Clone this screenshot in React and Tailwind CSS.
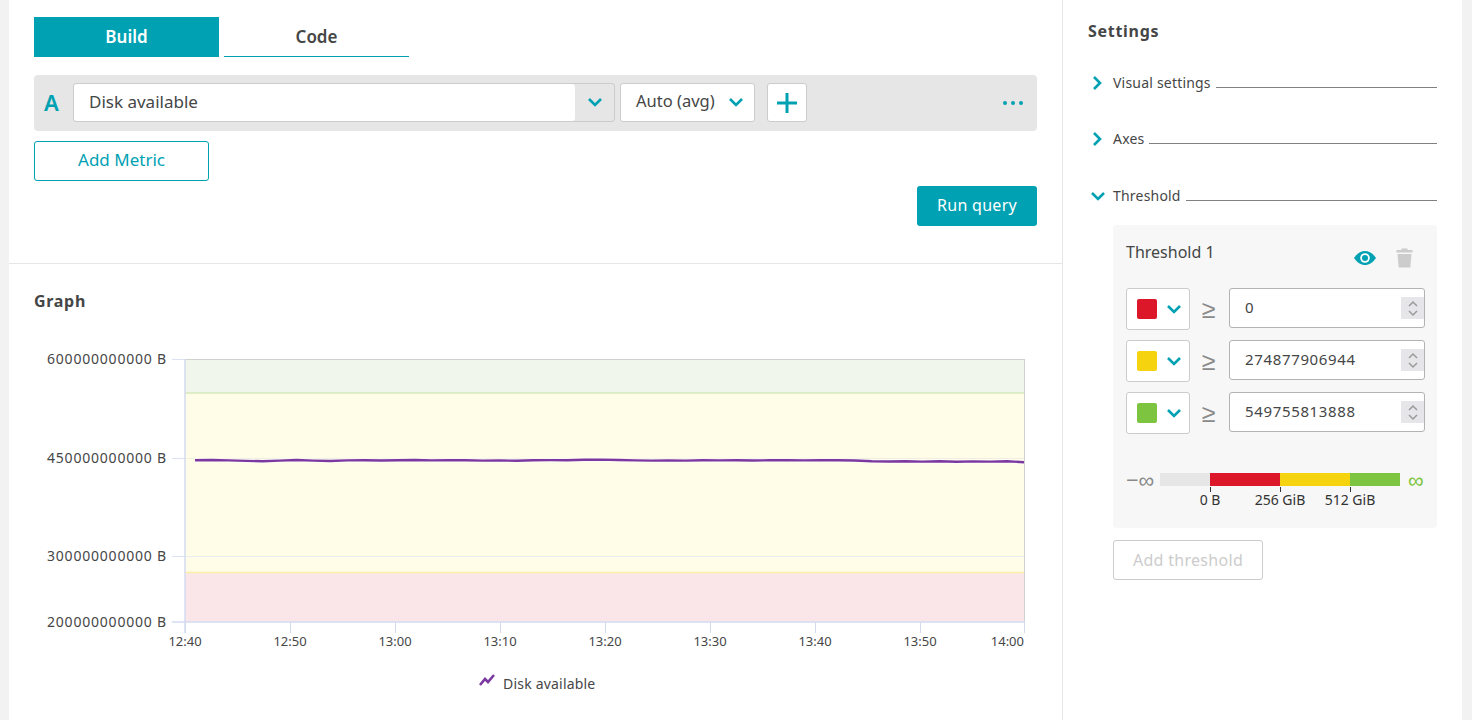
import React from "react";

const lineY = [460.3, 460, 460.4, 460.9, 461.2, 460.6, 460, 460.6, 461, 460.4, 460.2, 460.5, 460.3, 460, 460.4, 460.2, 460.3, 460.6, 460.5, 460.7, 460.2, 460.1, 460.2, 459.8, 459.6, 460, 460.4, 460.6, 460.5, 460.6, 460.3, 460.4, 460.2, 460.5, 460.3, 460.2, 460.4, 460.2, 460.3, 460.5, 461.2, 461.5, 461.2, 461.6, 461.3, 461.8, 461.4, 461.6, 461.3, 462.2];
const linePoints = lineY.map((y, i) => `${195 + (i * 829) / (lineY.length - 1)},${y}`).join(" ");

const yAxis = [
  { label: "600000000000 B", y: 359 },
  { label: "450000000000 B", y: 458 },
  { label: "300000000000 B", y: 556 },
  { label: "200000000000 B", y: 622 },
];
const xAxis = ["12:40", "12:50", "13:00", "13:10", "13:20", "13:30", "13:40", "13:50", "14:00"];

function Chevron({ dir = "down", className = "" }) {
  if (dir === "right") {
    return (
      <svg width="11" height="16" viewBox="0 0 11 16" className={className}>
        <polyline points="2,2 8,8 2,14" fill="none" stroke="#00a1b2" strokeWidth="2.6" />
      </svg>
    );
  }
  return (
    <svg width="16" height="11" viewBox="0 0 16 11" className={className}>
      <polyline points="2,2 8,8 14,2" fill="none" stroke="#00a1b2" strokeWidth="2.6" />
    </svg>
  );
}

function Chart() {
  return (
    <svg viewBox="9 320 1053 380" width="1053" height="380" className="block" style={{ fontFamily: "'Noto Sans', sans-serif" }}>
      <rect x="185" y="359" width="840" height="34" fill="#f0f6ec" />
      <rect x="185" y="393" width="840" height="179" fill="#fffde8" />
      <rect x="185" y="572" width="840" height="50" fill="#fae6e9" />
      <line x1="185" x2="1025" y1="393" y2="393" stroke="#d5e9bb" strokeWidth="1.5" />
      <line x1="185" x2="1025" y1="572.5" y2="572.5" stroke="#fbeea6" strokeWidth="1.5" />
      <line x1="185" x2="1025" y1="359.5" y2="359.5" stroke="#cfd2cf" />
      <line x1="1024.5" x2="1024.5" y1="359" y2="622" stroke="#cfd2cf" />
      <line x1="172" x2="185" y1="458.5" y2="458.5" stroke="#dbe2f3" />
      <line x1="172" x2="1024" y1="556.5" y2="556.5" stroke="#e9ebf0" />
      <line x1="172" x2="185" y1="556.5" y2="556.5" stroke="#dbe2f3" />
      <line x1="185" x2="1024" y1="458.5" y2="458.5" stroke="#f1eee0" />
      <line x1="172" x2="185" y1="359.5" y2="359.5" stroke="#dbe2f3" />
      <line x1="172" x2="1025" y1="622" y2="622" stroke="#d3dbef" strokeWidth="1.5" />
      <line x1="185" x2="185" y1="359" y2="633" stroke="#d3dbef" strokeWidth="1.5" />
      {xAxis.map((t, i) => (
        <g key={t}>
          <line x1={185.5 + i * 105 - (i === 8 ? 1 : 0)} x2={185.5 + i * 105 - (i === 8 ? 1 : 0)} y1="622" y2="633" stroke="#d3dbef" />
          <text
            x={i === 8 ? 1024 : 185 + i * 105}
            y="646"
            textAnchor={i === 8 ? "end" : "middle"}
            fontSize="13"
            fill="#454646"
          >
            {t}
          </text>
        </g>
      ))}
      {yAxis.map((a) => (
        <text key={a.label} x="167" y={a.y + 5} textAnchor="end" fontSize="14" letterSpacing="0.8" fill="#454646">{a.label}</text>
      ))}
      <polyline points={linePoints} fill="none" stroke="#ffffff" strokeOpacity="0.5" strokeWidth="4.5" />
      <polyline points={linePoints} fill="none" stroke="#7c38a1" strokeWidth="2.4" />
      <polyline points="480,685 485,679 488,682 494,675" fill="none" stroke="#7c38a1" strokeWidth="2.6" />
      <text x="503" y="689" fontSize="14" letterSpacing="0.2" fill="#454646">Disk available</text>
    </svg>
  );
}

function AccordionRow({ label, open, className = "" }) {
  return (
    <div className={`flex items-center h-[20px] ${className}`}>
      <div className={`w-[25px] flex items-center ${open ? "pl-[2px]" : "pl-[4px]"}`}>
        <Chevron dir={open ? "down" : "right"} />
      </div>
      <span className="text-[14px] leading-[20px] tracking-[0.2px] text-[#454646]">{label}</span>
      <div className="flex-1 ml-[5px] mt-[9px] h-px bg-[#808080]" />
    </div>
  );
}

function ThresholdRow({ color, value, className = "" }) {
  return (
    <div className={`flex items-start ${className}`}>
      <div className="w-[64px] h-[42px] bg-white border border-[#cccccc] rounded-[3px] flex items-center pl-[10px]">
        <div className={`w-[20px] h-[20px] rounded-[2px] ${color}`} />
        <Chevron className="ml-[9px]" />
      </div>
      <div className="w-[39px] h-[42px] flex items-center justify-center pr-[2px] pb-[2px] text-[25px] text-[#8a8a8a] leading-none">≥</div>
      <div className="w-[196px] h-[40px] bg-white border border-[#b3b3b3] rounded-[3px] flex items-center justify-between pl-[15px]">
        <span className="text-[15px] leading-[20px] pb-[2px] tracking-[0.65px] text-[#454646]">{value}</span>
        <div className="w-[23px] h-[22px] bg-[#e6e6ea] flex flex-col items-center justify-center gap-[3px]">
          <svg width="12" height="7" viewBox="0 0 12 7"><polyline points="2,6 6,2 10,6" fill="none" stroke="#9a9a9a" strokeWidth="1.5" /></svg>
          <svg width="12" height="7" viewBox="0 0 12 7"><polyline points="2,1 6,5 10,1" fill="none" stroke="#9a9a9a" strokeWidth="1.5" /></svg>
        </div>
      </div>
    </div>
  );
}

export default function App() {
  return (
    <div className="w-[1472px] h-[720px] overflow-hidden bg-[#f2f2f2] flex pl-[9px] pr-[10px] font-['Noto_Sans',sans-serif] text-[#454646]">
      <main className="w-[1054px] bg-white border-r border-[#e6e6e6]">
        <section className="h-[264px] border-b border-[#e6e6e6] pl-[25px] pr-[25px] pt-[17px]">
          <div className="flex gap-[5px]">
            <button className="w-[185px] h-[40px] bg-[#00a1b2] text-white text-[17px] font-semibold">Build</button>
            <button className="w-[185px] h-[40px] border-b border-[#00a1b2] text-[#454646] text-[17px] font-semibold">Code</button>
          </div>
          <div className="mt-[18px] h-[56px] bg-[#e6e6e6] rounded-[4px] flex items-center pb-[1px]">
            <span className="w-[39px] pl-[10px] text-[22px] font-semibold text-[#00a1b2]">A</span>
            <div className="w-[542px] h-[39px] bg-[#e6e6e6] border border-[#cccccc] rounded-[3px] flex">
              <div className="flex-1 bg-white rounded-[3px] flex items-center pl-[15px] pb-[2px] text-[17px]">Disk available</div>
              <div className="w-[39px] flex items-center justify-center"><Chevron /></div>
            </div>
            <div className="ml-[5px] w-[135px] h-[39px] bg-white border border-[#cccccc] rounded-[3px] flex items-center justify-between pl-[15px] pr-[10px] text-[16.5px]">
              <span className="pb-[2px]">Auto (avg)</span>
              <Chevron />
            </div>
            <div className="ml-[12px] w-[40px] h-[39px] bg-white border border-[#cccccc] rounded-[3px] flex items-center justify-center">
              <svg width="20" height="20" viewBox="0 0 20 20"><path d="M0 10H20M10 0V20" stroke="#00a1b2" strokeWidth="3" /></svg>
            </div>
            <div className="ml-auto mr-[14px] flex gap-[4px]">
              <div className="w-[4px] h-[4px] rounded-full bg-[#00a1b2]" />
              <div className="w-[4px] h-[4px] rounded-full bg-[#00a1b2]" />
              <div className="w-[4px] h-[4px] rounded-full bg-[#00a1b2]" />
            </div>
          </div>
          <button className="block mt-[10px] w-[175px] h-[40px] pb-[2px] border border-[#00a1b2] rounded-[3px] text-[#00a1b2] text-[17px]">Add Metric</button>
          <div className="flex justify-end mt-[5px]">
            <button className="w-[120px] h-[40px] pb-[2px] bg-[#00a1b2] rounded-[3px] text-white text-[16px] tracking-[0.3px]">Run query</button>
          </div>
        </section>
        <section>
          <h2 className="pl-[25px] pt-[27px] text-[16px] leading-[20px] tracking-[0.7px] font-bold">Graph</h2>
          <div className="mt-[9px]">
            <Chart />
          </div>
        </section>
      </main>
      <aside className="flex-1 bg-white pl-[25px] pr-[25px] pt-[21px]">
        <h2 className="text-[16px] leading-[20px] tracking-[0.7px] font-bold">Settings</h2>
        <AccordionRow label="Visual settings" className="mt-[32px]" />
        <AccordionRow label="Axes" className="mt-[36px]" />
        <AccordionRow label="Threshold" open className="mt-[37px]" />
        <div className="ml-[25px] mt-[19px] h-[303px] bg-[#f7f7f7] rounded-[4px] pl-[13px] pr-[12px] pt-[16px]">
          <div className="flex items-start justify-between h-[47px]">
            <span className="text-[16px] leading-[22px]">Threshold 1</span>
            <div className="flex items-center gap-[20px] pr-[12px] pt-[6px]">
              <svg width="22" height="14" viewBox="0 0 22 14">
                <path d="M0 7C3 2.500 7 0 11 0s8 2.500 11 7c-3 4.500-7 7-11 7S3 11.500 0 7z" fill="#00a1b2" />
                <circle cx="11" cy="7" r="4.800" fill="#ffffff" />
                <circle cx="11" cy="7" r="3" fill="#00a1b2" />
              </svg>
              <svg width="17" height="21" viewBox="0 0 17 21">
                <path d="M5.500 1.500h6V3h5v2.500H.5V3h5zM1.500 7h14l-1.200 13.500H2.700z" fill="#cccccc" />
              </svg>
            </div>
          </div>
          <ThresholdRow color="bg-[#dc172a]" value="0" />
          <ThresholdRow color="bg-[#f5d30f]" value="274877906944" className="mt-[10px]" />
          <ThresholdRow color="bg-[#7dc540]" value="549755813888" className="mt-[10px]" />
          <div className="mt-[37px] flex items-center h-[16px]">
            <span className="w-[34px] text-[22px] leading-none pb-[1px] whitespace-nowrap text-[#8a8a8a]">−∞</span>
            <div className="w-[240px] h-[13px] flex">
              <div className="w-[50px] bg-[#e6e6e6]" />
              <div className="w-[70px] bg-[#dc172a]" />
              <div className="w-[70px] bg-[#f5d30f]" />
              <div className="w-[50px] bg-[#7dc540]" />
            </div>
            <span className="ml-[8px] text-[22px] leading-none pb-[1px] text-[#7dc540]">∞</span>
          </div>
          <div className="relative ml-[34px] w-[240px] h-[22px]">
            <div className="absolute left-[50px] top-0 w-px h-[5px] bg-[#333333]" />
            <div className="absolute left-[120px] top-0 w-px h-[5px] bg-[#333333]" />
            <div className="absolute left-[190px] top-0 w-px h-[5px] bg-[#333333]" />
            <span className="absolute left-[50px] top-[4px] -translate-x-1/2 text-[14px] leading-[18px] whitespace-nowrap text-[#333333]">0 B</span>
            <span className="absolute left-[120px] top-[4px] -translate-x-1/2 text-[14px] leading-[18px] whitespace-nowrap text-[#333333]">256 GiB</span>
            <span className="absolute left-[190px] top-[4px] -translate-x-1/2 text-[14px] leading-[18px] whitespace-nowrap text-[#333333]">512 GiB</span>
          </div>
        </div>
        <button className="block ml-[25px] mt-[12px] w-[150px] h-[40px] border border-[#cccccc] rounded-[3px] text-[#cccccc] text-[16px] tracking-[0.3px]">Add threshold</button>
      </aside>
    </div>
  );
}
